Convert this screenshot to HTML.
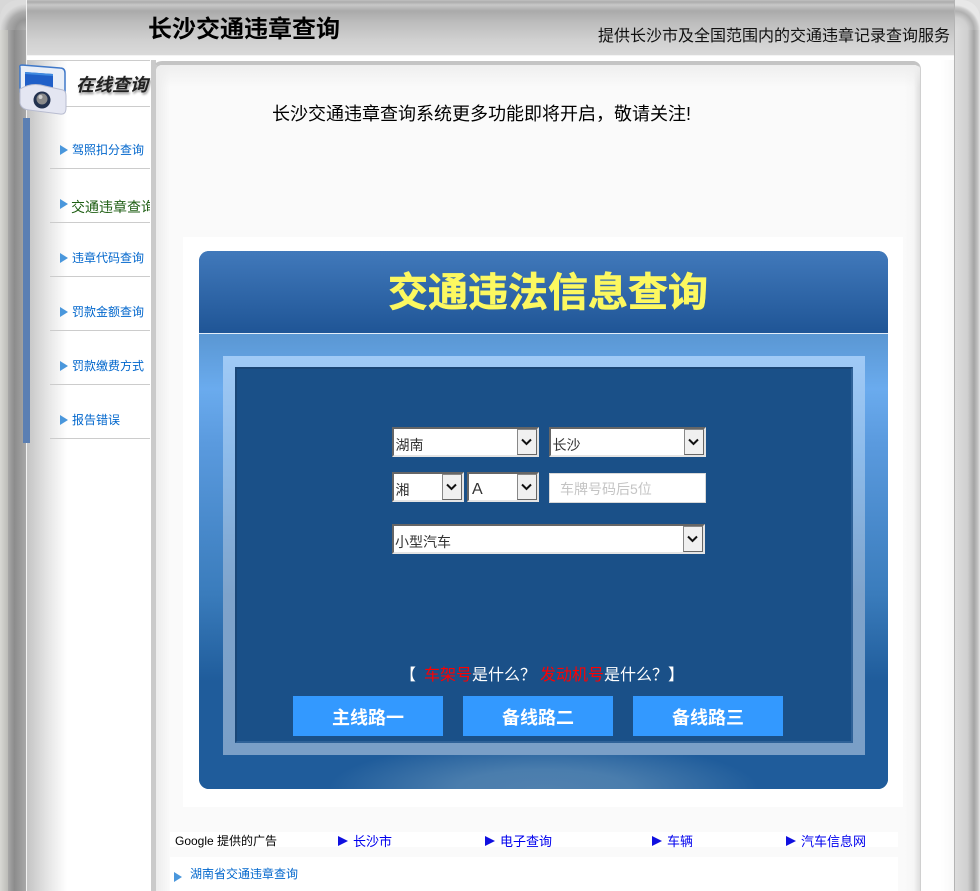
<!DOCTYPE html>
<html lang="zh">
<head>
<meta charset="utf-8">
<title>长沙交通违章查询</title>
<style>
html,body{margin:0;padding:0;background:#fff}
#p{position:relative;width:980px;height:891px;overflow:hidden;background:#fff;font-family:"Liberation Sans","WenQuanYi Zen Hei","Noto Sans CJK SC",sans-serif}
#p div,#p a,#p span.a{position:absolute;white-space:nowrap}
.nav{left:72px;font-size:12px;line-height:14px;color:#0066cc;width:78px;overflow:hidden;text-decoration:none}
.line{left:50px;width:100px;height:1px;background:#ccc}
.tri{width:0;height:0;border-left:8px solid #4a97dc;border-top:5px solid transparent;border-bottom:5px solid transparent;left:60px}
.sel{box-sizing:border-box;background:#fff;border-top:2px solid #666;border-left:2px solid #666;border-right:2px solid #e4e4e4;border-bottom:2px solid #e4e4e4;font-size:14px;color:#333;line-height:16px}
.sel .b{box-sizing:border-box;right:0;top:0;width:20px;height:26px;background:#f0f0f0;border:1px solid #888;border-bottom-color:#666;border-right-color:#666}
.sel svg{position:absolute;left:3px;top:8px}
.sel .t{left:1.5px;top:8px}
.btn{top:696px;width:150px;height:40px;background:#3399ff;color:#fff;font-size:18px;font-weight:bold;line-height:45px;text-align:center}
.ad{top:834px;font-size:13px;line-height:15px;color:#0000ee}
.adt{top:836px;width:0;height:0;border-left:10px solid #1010e0;border-top:5px solid transparent;border-bottom:5px solid transparent}
.q{top:666px;font-size:16px;line-height:19px;color:#fff}
</style>
</head>
<body>
<div id="p">
  <!-- left chrome -->
  <div style="left:0;top:0;width:8px;height:891px;background:linear-gradient(90deg,#d8d8d4,#bcbcb8)"></div>
  <div style="left:8px;top:0;width:18px;height:891px;background:linear-gradient(90deg,#a8a8a8,#8c8c8c 35%,#a8a8a8 100%)"></div>
  <div style="left:26px;top:0;width:1px;height:891px;background:#f2f2f2"></div>
  <div style="left:27px;top:56px;width:40px;height:835px;background:linear-gradient(90deg,#c4c4c4,#e4e4e4 50%,#fff)"></div>
  <div style="left:0;top:0;width:26px;height:30px;background:#d8d8d8"></div>
  <div style="left:0;top:0;width:26px;height:30px;border-top-left-radius:18px;background:radial-gradient(circle 26px at 26px 30px,#b0b0b0 0,#969696 40%,#acacac 70%,#c8c8c8 85%,#dcdcdc 100%)"></div>

  <!-- right chrome -->
  <div style="left:921px;top:56px;width:33px;height:835px;background:linear-gradient(90deg,#fff,#fff 60%,#f8f8f8)"></div>
  <div style="left:955px;top:0;width:25px;height:891px;background:linear-gradient(90deg,#dcdcdc,#d0d0d0 50%,#a4a4a4 76%,#c0c0c0 90%,#e4e4e4)"></div>
  <div style="left:955px;top:0;width:25px;height:30px;background:#e0e0e0"></div>
  <div style="left:955px;top:0;width:25px;height:30px;border-top-right-radius:18px;background:radial-gradient(circle 25px at 0 30px,#dcdcdc 0,#d0d0d0 50%,#b0b0b0 76%,#c8c8c8 90%,#e8e8e8 100%)"></div>
  <div style="left:954px;top:0;width:1px;height:891px;background:#b4b4b4"></div>

  <!-- header -->
  <div style="left:27px;top:0;width:927px;height:55px;background:linear-gradient(180deg,#c0c0c0 0,#acacac 2px,#c8c8c8 5px,#aaaaaa 11px,#bcbcbc 22px,#d0d0d0 40px,#dadada 55px)"></div>
  <div style="left:27px;top:55px;width:927px;height:1px;background:#f4f4f4"></div>
  <div style="left:27px;top:56px;width:927px;height:4px;background:#fff"></div>
  <div style="left:148px;top:15px;font-size:24px;line-height:30px;font-weight:bold;color:#000">长沙交通违章查询</div>
  <div style="left:598px;top:28px;font-size:16px;line-height:18px;color:#111">提供长沙市及全国范围内的交通违章记录查询服务</div>

  <!-- sidebar -->
  <div style="left:32px;top:60px;width:118px;height:1px;background:#ccc"></div>
  <div style="left:50px;top:106px;width:100px;height:1px;background:#ccc"></div>
  <div style="left:23px;top:118px;width:7px;height:325px;background:#5b7fb3"></div>
  <div style="left:76px;top:75px;font-size:18px;line-height:20px;font-weight:bold;font-style:italic;color:#222;text-shadow:1px 2px 2px #999">在线查询</div>
  <svg style="position:absolute;left:17px;top:62px" width="52" height="56" viewBox="0 0 52 56">
    <path d="M3 6Q2 3 5 3L43 6Q48 6 48 11V34L3 30Z" fill="#e8eef8" stroke="#3f78c9" stroke-width="1.500"/>
    <path d="M8 10L36 12V27L8 25Z" fill="#1f5fc8"/>
    <path d="M8 10L36 12V14L8 12Z" fill="#3f8ae0"/>
    <path d="M3 27Q15 20 28 24L46 28Q49 29 49 34V46Q49 53 43 52L12 48Q4 47 3 41Z" fill="#e4e6f2" stroke="#b8bcd0"/>
    <circle cx="25" cy="38" r="8.500" fill="#23324f"/>
    <circle cx="25" cy="37" r="5.500" fill="#8a8a8a"/>
    <circle cx="23.500" cy="35" r="2" fill="#d0d0d0"/>
  </svg>

  <div class="tri" style="top:145px"></div>
  <a class="nav" style="top:143px">驾照扣分查询</a>
  <div class="line" style="top:168px"></div>
  <div class="tri" style="top:199px"></div>
  <a class="nav" style="left:71px;width:79px;top:199px;font-size:14px;line-height:16px;color:#1f5f14">交通违章查询</a>
  <div class="line" style="top:222px"></div>
  <div class="tri" style="top:253px"></div>
  <a class="nav" style="top:251px">违章代码查询</a>
  <div class="line" style="top:276px"></div>
  <div class="tri" style="top:307px"></div>
  <a class="nav" style="top:305px">罚款金额查询</a>
  <div class="line" style="top:330px"></div>
  <div class="tri" style="top:361px"></div>
  <a class="nav" style="top:359px">罚款缴费方式</a>
  <div class="line" style="top:384px"></div>
  <div class="tri" style="top:415px"></div>
  <a class="nav" style="top:413px">报告错误</a>
  <div class="line" style="top:438px"></div>

  <!-- content panel -->
  <div style="left:151px;top:60px;width:5px;height:831px;background:#cacaca"></div>
  <div style="box-sizing:border-box;left:152px;top:61px;width:769px;height:840px;background:#fafafa;border-top:4px solid #c4c4c4;border-left:4px solid #cacaca;border-right:1px solid #d0d0d0;border-radius:10px 8px 0 0;overflow:hidden">
    <div style="left:0;top:0;width:14px;height:826px;background:linear-gradient(90deg,#ececec,#fafafa)"></div>
    <div style="right:0;top:0;width:16px;height:826px;background:linear-gradient(90deg,#fafafa,#f6f6f6 60%,#dedede)"></div>
    <div style="left:0;top:0;width:764px;height:22px;background:linear-gradient(180deg,#eeeeee,rgba(250,250,250,0))"></div>
  </div>
  <div style="left:272px;top:103px;font-size:18px;line-height:22px;color:#000">长沙交通违章查询系统更多功能即将开启，敬请关注!</div>

  <!-- widget -->
  <div style="left:183px;top:237px;width:720px;height:570px;background:#fff"></div>
  <div style="left:199px;top:251px;width:689px;height:538px;border-radius:10px;overflow:hidden;background:#1f5c9b">
    <div style="left:0;top:0;width:689px;height:82px;background:linear-gradient(180deg,#4179bb,#1f5596)"></div>
    <div style="left:0;top:82px;width:689px;height:1px;background:#e4eef8"></div>
    <div style="left:0;top:83px;width:689px;height:110px;background:linear-gradient(180deg,#5a97d3,#6aabee 50%,#5a9ade)"></div>
    <div style="left:0;top:193px;width:689px;height:150px;background:linear-gradient(180deg,#5a9ade,#3a7cbc)"></div>
    <div style="left:0;top:343px;width:689px;height:195px;background:linear-gradient(180deg,#3a7cbc,#1f5c9b 45%)"></div>
    <div style="left:0;top:490px;width:689px;height:48px;background:radial-gradient(ellipse 215px 48px at 50% 100%,#5080ae 0,#4a7dad 40%,rgba(31,92,155,0) 100%)"></div>
    <div style="left:24px;top:105px;width:642px;height:399px;background:linear-gradient(180deg,#a0caf6,#8dbbea 25%,#7ea3cb 60%,#7a9fc7)"></div>
  </div>
  <div style="box-sizing:border-box;left:235px;top:367px;width:618px;height:376px;background:#1a5088;border:2px solid #1a4676;border-bottom-color:#2f6298;border-right-color:#2f6298"></div>

  <div style="left:388px;top:271px;font-size:40px;line-height:44px;font-weight:bold;color:#fcf860;-webkit-text-stroke:.6px #fcf860">交通违法信息查询</div>

  <div class="sel" style="left:392px;top:427px;width:147px;height:30px"><span class="t a" style="position:absolute">湖南</span><div class="b"><svg width="11" height="9" viewBox="0 0 11 9"><path d="M1 1.500L5.500 6L10 1.500" fill="none" stroke="#111" stroke-width="2"/></svg></div></div>
  <div class="sel" style="left:549px;top:427px;width:157px;height:30px"><span class="t a" style="position:absolute">长沙</span><div class="b"><svg width="11" height="9" viewBox="0 0 11 9"><path d="M1 1.500L5.500 6L10 1.500" fill="none" stroke="#111" stroke-width="2"/></svg></div></div>
  <div class="sel" style="left:392px;top:472px;width:72px;height:30px"><span class="t a" style="position:absolute">湘</span><div class="b"><svg width="11" height="9" viewBox="0 0 11 9"><path d="M1 1.500L5.500 6L10 1.500" fill="none" stroke="#111" stroke-width="2"/></svg></div></div>
  <div class="sel" style="left:467px;top:472px;width:72px;height:30px"><span class="t a" style="position:absolute;font-size:16px;left:3px">A</span><div class="b"><svg width="11" height="9" viewBox="0 0 11 9"><path d="M1 1.500L5.500 6L10 1.500" fill="none" stroke="#111" stroke-width="2"/></svg></div></div>
  <div style="box-sizing:border-box;left:549px;top:473px;width:157px;height:30px;background:#fff;border:1px solid #d8d8d8;font-size:14px;line-height:31px;color:#c4c4c4;padding-left:10px">车牌号码后5位</div>
  <div class="sel" style="left:392px;top:524px;width:313px;height:30px"><span class="t a" style="position:absolute;left:1px;top:8px">小型汽车</span><div class="b"><svg width="11" height="9" viewBox="0 0 11 9"><path d="M1 1.500L5.500 6L10 1.500" fill="none" stroke="#111" stroke-width="2"/></svg></div></div>

  <div class="q" style="left:400px">【</div>
  <div class="q" style="left:424px"><span style="color:#f00">车架号</span>是什么？</div>
  <div class="q" style="left:540px"><span style="color:#f00">发动机号</span>是什么？】</div>

  <div class="btn" style="left:293px">主线路一</div>
  <div class="btn" style="left:463px">备线路二</div>
  <div class="btn" style="left:633px">备线路三</div>

  <!-- ads -->
  <div style="left:170px;top:832px;width:728px;height:15px;background:#fff"></div>
  <div style="left:175px;top:834px;font-size:12px;line-height:15px;color:#000">Google 提供的广告</div>
  <div class="adt" style="left:338px"></div><a class="ad" style="left:353px">长沙市</a>
  <div class="adt" style="left:485px"></div><a class="ad" style="left:500px">电子查询</a>
  <div class="adt" style="left:652px"></div><a class="ad" style="left:667px">车辆</a>
  <div class="adt" style="left:786px"></div><a class="ad" style="left:801px">汽车信息网</a>
  <div style="left:170px;top:857px;width:728px;height:34px;background:#fff"></div>
  <div class="tri" style="left:174px;top:872px"></div>
  <a class="nav" style="left:190px;top:867px;width:auto;color:#0066cc">湖南省交通违章查询</a>
</div>
</body>
</html>
